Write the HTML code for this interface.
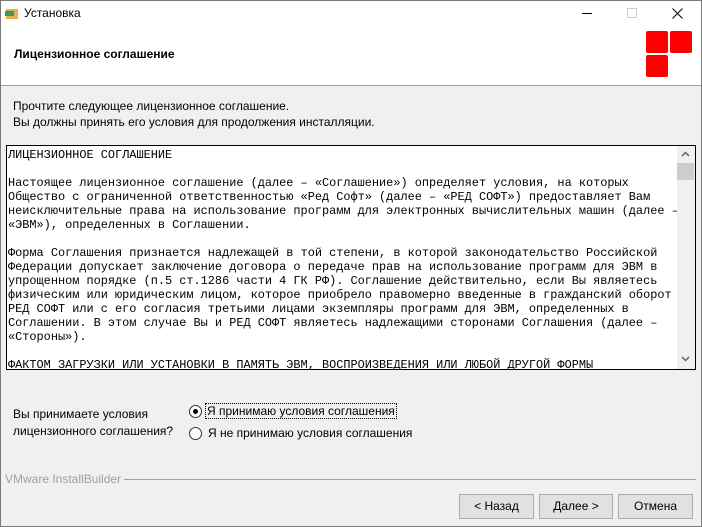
<!DOCTYPE html>
<html><head><meta charset="utf-8"><style>
*{margin:0;padding:0;box-sizing:border-box}
body{width:702px;height:527px;background:#f0f0f0;font-family:"Liberation Sans",sans-serif;font-size:12px;color:#000;position:relative;overflow:hidden}
.abs{position:absolute}
.win{position:absolute;left:0;top:0;width:702px;height:527px;border:1px solid #7a7a7a}
.mono{font-family:"Liberation Mono",monospace;font-size:11.9px;line-height:14px;white-space:pre;color:#000}
.btn{position:absolute;top:494px;height:25px;border:1px solid #adadad;background:#e1e1e1;text-align:center;line-height:23px;font-size:12px}
.radio{position:absolute;width:13px;height:13px;border:1px solid #333;border-radius:50%;background:#fff}
</style></head><body>
<div class="abs" style="left:0;top:0;width:702px;height:85px;background:#fff"></div>
<div class="abs" style="left:0;top:85px;width:702px;height:1px;background:#a0a0a0"></div>
<div class="win"></div>
<div class="abs" style="left:6px;top:9px;width:12px;height:10px;background:#e8b04a"></div>
<div class="abs" style="left:5px;top:11px;width:9px;height:5px;background:#3a9a5a"></div>
<div class="abs" style="left:24px;top:6px;font-size:12px">Установка</div>
<div class="abs" style="left:582px;top:13px;width:10px;height:1px;background:#000"></div>
<div class="abs" style="left:627px;top:8px;width:10px;height:10px;border:1px solid #ccc"></div>
<svg class="abs" style="left:672px;top:8px" width="11" height="11"><path d="M0.5 0.5L10.5 10.5M10.5 0.5L0.5 10.5" stroke="#000" stroke-width="1"/></svg>
<div class="abs" style="left:14px;top:47px;font-weight:bold;font-size:12px">Лицензионное соглашение</div>
<div class="abs" style="left:646px;top:31px;width:22px;height:22px;background:#f00;border-radius:2px"></div>
<div class="abs" style="left:670px;top:31px;width:22px;height:22px;background:#f00;border-radius:2px"></div>
<div class="abs" style="left:646px;top:55px;width:22px;height:22px;background:#f00;border-radius:2px"></div>
<div class="abs" style="left:13px;top:98px;line-height:16px">Прочтите следующее лицензионное соглашение.<br>Вы должны принять его условия для продолжения инсталляции.</div>
<div class="abs" style="left:6px;top:145px;width:690px;height:225px;border:1px solid #000;background:#fff;overflow:hidden">
<div class="mono abs" style="left:1px;top:2px">ЛИЦЕНЗИОННОЕ СОГЛАШЕНИЕ

Настоящее лицензионное соглашение (далее – «Соглашение») определяет условия, на которых
Общество с ограниченной ответственностью «Ред Софт» (далее – «РЕД СОФТ») предоставляет Вам
неисключительные права на использование программ для электронных вычислительных машин (далее –
«ЭВМ»), определенных в Соглашении.

Форма Соглашения признается надлежащей в той степени, в которой законодательство Российской
Федерации допускает заключение договора о передаче прав на использование программ для ЭВМ в
упрощенном порядке (п.5 ст.1286 части 4 ГК РФ). Соглашение действительно, если Вы являетесь
физическим или юридическим лицом, которое приобрело правомерно введенные в гражданский оборот
РЕД СОФТ или с его согласия третьими лицами экземпляры программ для ЭВМ, определенных в
Соглашении. В этом случае Вы и РЕД СОФТ являетесь надлежащими сторонами Соглашения (далее –
«Стороны»).

ФАКТОМ ЗАГРУЗКИ ИЛИ УСТАНОВКИ В ПАМЯТЬ ЭВМ, ВОСПРОИЗВЕДЕНИЯ ИЛИ ЛЮБОЙ ДРУГОЙ ФОРМЫ</div>
<div class="abs" style="left:670px;top:0;width:18px;height:223px;background:#f0f0f0"></div>
<div class="abs" style="left:670px;top:17px;width:17px;height:17px;background:#cdcdcd"></div>
<svg class="abs" style="left:674px;top:5px" width="9" height="6"><path d="M1 5L4.5 1.5L8 5" stroke="#606060" stroke-width="1.5" fill="none"/></svg>
<svg class="abs" style="left:674px;top:210px" width="9" height="6"><path d="M1 1L4.5 4.5L8 1" stroke="#606060" stroke-width="1.5" fill="none"/></svg>
</div>
<div class="abs" style="left:13px;top:406px;line-height:17px">Вы принимаете условия<br>лицензионного соглашения?</div>
<div class="radio" style="left:189px;top:405px"></div>
<div class="abs" style="left:193px;top:409px;width:5px;height:5px;border-radius:50%;background:#000"></div>
<div class="abs" style="left:205px;top:403px;border:1px dotted #000;padding:0 1px;line-height:14px">Я принимаю условия соглашения</div>
<div class="radio" style="left:189px;top:427px"></div>
<div class="abs" style="left:208px;top:426px">Я не принимаю условия соглашения</div>
<div class="abs" style="left:5px;top:472px;color:#a0a0a0;font-size:12px">VMware InstallBuilder</div>
<div class="abs" style="left:124px;top:479px;width:572px;height:1px;background:#a0a0a0"></div>
<div class="btn" style="left:459px;width:75px">&lt; Назад</div>
<div class="btn" style="left:539px;width:74px">Далее &gt;</div>
<div class="btn" style="left:618px;width:75px">Отмена</div>
</body></html>
